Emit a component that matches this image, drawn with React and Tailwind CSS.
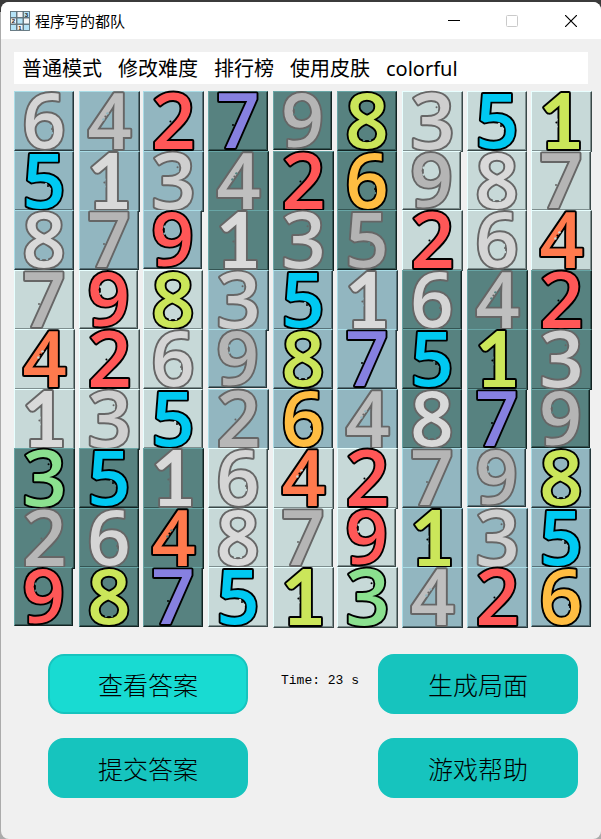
import React from "react";

// A star after a digit marks it as one of the player's coloured digits.
const ROWS = [
  "6 4 2* 7* 9 8* 3 5* 1*",
  "5* 1 3 4 2* 6* 9 8 7",
  "8 7 9* 1 3 5 2* 6 4*",
  "7 9* 8* 3 5* 1 6 4 2*",
  "4* 2* 6 9 8* 7* 5* 1* 3",
  "1 3 5* 2 6* 4 8 7* 9",
  "3* 5* 1 6 4* 2* 7 9 8*",
  "2 6 4* 8 7 9* 1* 3 5*",
  "9* 8* 7* 5* 1* 3* 4 2* 6*",
].map((row) => row.split(" "));

const BOX_TONES = [
  ["blue", "dark", "light"],
  ["light", "blue", "dark"],
  ["dark", "light", "blue"],
];

const TONES = {
  blue: {
    fill: "#92b6c0",
    tile: "bg-[#92b6c0] border-t-[#a9dce6] border-l-[#a9dce6] border-r-[#26373b] border-b-[#26373b] shadow-[inset_-1px_-1px_#587178]",
  },
  dark: {
    fill: "#578280",
    tile: "bg-[#578280] border-t-[#68a5a5] border-l-[#68a5a5] border-r-[#122322] border-b-[#122322] shadow-[inset_-1px_-1px_#345452]",
  },
  light: {
    fill: "#c7d9d8",
    tile: "bg-[#c7d9d8] border-t-[#e8ffff] border-l-[#e8ffff] border-r-[#3a4848] border-b-[#3a4848] shadow-[inset_-1px_-1px_#7e8e8e]",
  },
};

// The one has a foot, so it is set in Lato; the others are Open Sans.
const SANS = "font-['Open_Sans',sans-serif] text-[76px] font-semibold";
const FOOTED = "font-['Lato',sans-serif] text-[76px] font-bold";

// Fill colours, tile size and the three specks that break each outline.
const DIGITS = {
  1: { color: "#cbe65a", gray: "#d9d9d9", size: "size-[61px]", font: FOOTED, dots: [[25, 28], [25, 31], [25, 35]] },
  2: { color: "#ff5757", gray: "#b7b7b7", size: "size-[61px]", font: SANS, dots: [[29, 27], [27, 30], [24, 33]] },
  3: { color: "#8be08f", gray: "#cfcfcf", size: "size-[61px]", font: SANS, dots: [[33, 13], [34, 16], [34, 20]] },
  4: { color: "#ff7a4d", gray: "#bfbfbf", size: "size-[61px]", font: SANS, dots: [[28, 22], [26, 25], [24, 28]] },
  5: { color: "#00c9f2", gray: "#b3b3b3", size: "size-[60px]", font: SANS, dots: [[32, 33], [34, 35], [36, 38]] },
  6: { color: "#ffbd42", gray: "#d5d5d5", size: "size-[60px]", font: SANS, dots: [[37, 35], [38, 38], [38, 42]] },
  7: { color: "#8680e0", gray: "#b5b5b5", size: "size-[60px]", font: SANS, dots: [[26, 31], [25, 34], [23, 37]] },
  8: { color: "#cbe65a", gray: "#d9d9d9", size: "size-[60px]", font: SANS, dots: [[27, 49], [30, 50], [33, 49]] },
  9: { color: "#ff5757", gray: "#b5b5b5", size: "size-[59px]", font: SANS, dots: [[22, 17], [21, 20], [22, 24]] },
};

const MENU = ["普通模式", "修改难度", "排行榜", "使用皮肤", "colorful"];

function Tile({ value, tone }) {
  const digit = value[0];
  const colored = value.length > 1;
  const d = DIGITS[digit];
  const t = TONES[tone];
  const stroke = colored ? "#000000" : "#666666";
  const [a, b, c] = d.dots;
  return (
    <button type="button" className={`block border ${d.size} ${t.tile}`}>
      <svg viewBox="1 1 58 58" className="block h-full w-full overflow-visible">
        <text
          x="30"
          y="57"
          textAnchor="middle"
          className={d.font}
          fill={colored ? d.color : d.gray}
          stroke={stroke}
          strokeWidth="3.8"
          strokeLinejoin="round"
          paintOrder="stroke"
        >
          {digit}
        </text>
        <circle cx={a[0]} cy={a[1]} r="1.2" fill={t.fill} />
        <circle cx={c[0]} cy={c[1]} r="1.2" fill={t.fill} />
        <circle cx={b[0]} cy={b[1]} r="1" fill={stroke} />
      </svg>
    </button>
  );
}

function AppIcon() {
  const cells = [];
  for (let r = 0; r < 3; r++)
    for (let c = 0; c < 3; c++)
      cells.push(
        <rect key={`${r}${c}`} x={c * 6.5 + 0.5} y={r * 6.5 + 0.5} width="6" height="6"
          fill={(r === 1) === (c === 1) ? "#b5e3f7" : "#f4f5f7"} stroke="#5d7079" strokeWidth="0.9" />
      );
  return (
    <svg viewBox="0 0 20 20" className="size-5 shrink-0" aria-hidden="true">
      {cells}
      <g className="font-['Liberation_Sans',sans-serif] text-[6px] font-bold" fill="#222" textAnchor="middle">
        <text x="16.5" y="5.7">3</text>
        <text x="3.5" y="12.2">2</text>
        <text x="10" y="18.7">1</text>
      </g>
    </svg>
  );
}

function TitleBar() {
  return (
    <header className="flex h-[37px] items-center bg-white pl-[9px]">
      <AppIcon />
      <h1 className="flex-1 pl-[5px] text-[15px] leading-5 text-black">程序写的都队</h1>
      <button type="button" aria-label="Minimize" className="flex h-full w-[58px] items-center justify-center">
        <svg viewBox="0 0 12 12" className="size-3"><path d="M0 5.5H12" stroke="#000" /></svg>
      </button>
      <button type="button" aria-label="Maximize" disabled className="flex h-full w-[58px] items-center justify-center">
        <svg viewBox="0 0 12 12" className="size-3"><rect x=".5" y=".5" width="11" height="11" rx="1" fill="none" stroke="#cacaca" /></svg>
      </button>
      <button type="button" aria-label="Close" className="flex h-full w-[60px] items-center justify-center">
        <svg viewBox="0 0 12 12" className="size-3"><path d="M0 0L12 12M12 0L0 12" stroke="#000" strokeWidth="1.2" /></svg>
      </button>
    </header>
  );
}

function ActionButton({ children, active }) {
  return (
    <button
      type="button"
      className={`h-[60px] w-[200px] rounded-2xl border-2 border-[#16c4be] pt-[2px] text-[25px] font-light leading-8 text-black ${active ? "bg-[#18dbd2]" : "bg-[#16c4be]"}`}
    >
      {children}
    </button>
  );
}

export default function App() {
  return (
    <div className="flex min-h-screen flex-col bg-[linear-gradient(#3b3b3b_12px,#ababab_12px)] pt-[2px] pl-px font-['Noto_Sans','Noto_Sans_CJK_SC',sans-serif]">
      <div className="flex flex-1 flex-col overflow-hidden rounded-lg bg-[#f0f0f0]">
        <TitleBar />
        <nav className="mt-[13px] mr-[13px] ml-[13px] flex h-8 items-center gap-4 bg-white pt-[2px] pl-2 text-xl leading-7 text-black">
          {MENU.map((item) => (
            <button key={item} type="button" className="whitespace-nowrap">{item}</button>
          ))}
        </nav>
        <main className="mt-[7px] mr-[5px] ml-[13px] grid h-[536px] grid-cols-9 grid-rows-9">
          {ROWS.flatMap((row, r) =>
            row.map((value, c) => (
              <div key={`${r}-${c}`} className="min-h-0 min-w-0">
                <Tile value={value} tone={BOX_TONES[Math.floor(r / 3)][Math.floor(c / 3)]} />
              </div>
            ))
          )}
        </main>
        <footer className="mt-[27px] mr-[23px] mb-10 ml-[47px] flex justify-between">
          <div className="flex flex-col gap-6">
            <ActionButton active>查看答案</ActionButton>
            <ActionButton>提交答案</ActionButton>
          </div>
          <p className="pt-[17px] pl-[14px] font-['Liberation_Mono',monospace] text-[13px] leading-5 text-black">Time: 23 s</p>
          <div className="flex flex-col gap-6">
            <ActionButton>生成局面</ActionButton>
            <ActionButton>游戏帮助</ActionButton>
          </div>
        </footer>
      </div>
    </div>
  );
}
